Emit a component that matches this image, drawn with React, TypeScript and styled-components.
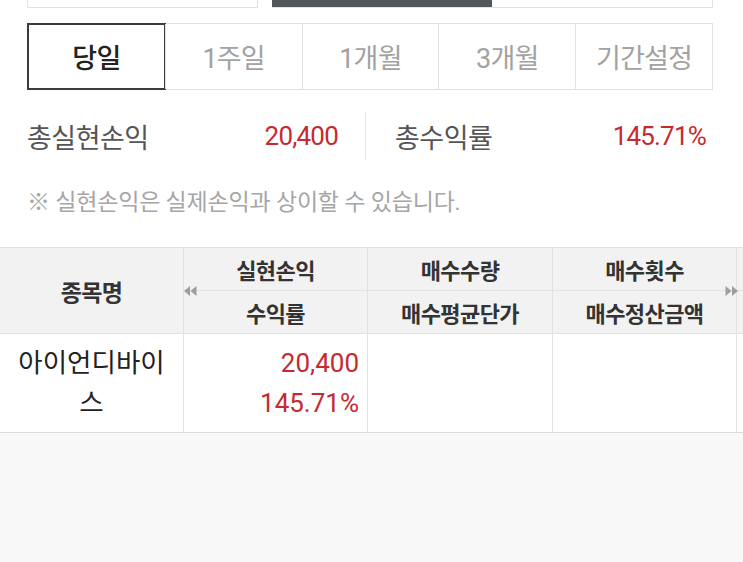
import React from 'react';
import styled, { createGlobalStyle } from 'styled-components';

const GlobalStyle = createGlobalStyle`
  html, body {
    margin: 0;
    padding: 0;
    background: #fff;
  }
  body {
    font-family: Roboto, 'Noto Sans CJK KR', sans-serif;
    color: #222;
    overflow: hidden;
  }
  * {
    box-sizing: border-box;
  }
`;

const S = {
  Page: styled.div`
    display: flex;
    flex-direction: column;
    min-height: 100vh;
    overflow: hidden;
  `,
  Controls: styled.div`
    display: flex;
    align-items: stretch;
    gap: 14px;
    height: 40px;
    margin-top: -32px;
    padding: 0 30px 0 27px;
  `,
  SelectBox: styled.div`
    width: 231px;
    border: 1px solid #e2e2e2;
    background: #fff;
  `,
  Toggle: styled.div`
    flex: 1;
    display: flex;
    border: 1px solid #e2e2e2;
    border-left: none;
  `,
  ToggleHalf: styled.div<{ $on?: boolean }>`
    flex: 1;
    background: ${(p) => (p.$on ? '#53575b' : '#fff')};
  `,
  Tabs: styled.div`
    display: grid;
    grid-template-columns: repeat(5, 1fr);
    height: 67px;
    margin: 15px 30px 0 27px;
    border: 1px solid #e2e2e2;
  `,
  Tab: styled.div<{ $active?: boolean }>`
    display: flex;
    align-items: center;
    justify-content: center;
    font-size: 27px;
    color: ${(p) => (p.$active ? '#222' : '#a2a2a2')};
    border-left: 1px solid #e2e2e2;
    letter-spacing: -0.8px;
    ${(p) =>
      p.$active &&
      `
      border: 2px solid #3c3c3c;
      margin: -1px;
      font-weight: 500;
    `}
    &:first-child {
      border-left: ${(p) => (p.$active ? '2px solid #3c3c3c' : 'none')};
    }
  `,
  Summary: styled.div`
    display: flex;
    align-items: center;
    height: 48px;
    margin-top: 22px;
    padding: 0 37px 0 27px;
  `,
  SummaryItem: styled.div<{ $right?: boolean }>`
    flex: 1;
    display: flex;
    align-items: center;
    justify-content: space-between;
    padding: ${(p) => (p.$right ? '0 0 0 26px' : '0 30px 0 0')};
  `,
  SummaryLabel: styled.span`
    font-size: 27px;
    color: #555;
    letter-spacing: -0.5px;
  `,
  SummaryValue: styled.span`
    font-size: 26px;
    color: #c62a2f;
    letter-spacing: -0.8px;
  `,
  Divider: styled.div`
    width: 1px;
    align-self: stretch;
    background: #e6e6e6;
    margin-left: -3px;
    margin-right: 3px;
  `,
  Note: styled.p`
    margin: 26px 0 0;
    padding-left: 27px;
    font-size: 23px;
    line-height: 34px;
    color: #a6a6a6;
    letter-spacing: -0.2px;
  `,
  Table: styled.div`
    position: relative;
    margin-top: 27px;
    display: grid;
    grid-template-columns: 184px 184px 185px 184px 184px;
    grid-template-rows: 43px 43px 98px;
    border-top: 1px solid #e2e2e2;
    border-bottom: 1px solid #dcdcdc;
    background: #fff;
    width: max-content;
  `,
  HeadCell: styled.div<{ $span?: boolean }>`
    display: flex;
    align-items: center;
    justify-content: center;
    background: #f2f2f2;
    border-right: 1px solid #e2e2e2;
    border-bottom: 1px solid #e2e2e2;
    font-size: 22px;
    font-weight: 700;
    color: #333;
    letter-spacing: -0.6px;
    ${(p) => p.$span && 'grid-row: span 2; font-size: 23px;'}
  `,
  NameCell: styled.div`
    display: flex;
    align-items: center;
    justify-content: center;
    padding: 0 10px;
    border-right: 1px solid #e2e2e2;
    font-size: 26.5px;
    line-height: 40px;
    color: #222;
    text-align: center;
    word-break: break-all;
  `,
  ValueCell: styled.div`
    display: flex;
    flex-direction: column;
    justify-content: center;
    align-items: flex-end;
    padding-right: 8px;
    border-right: 1px solid #e2e2e2;
    font-size: 26px;
    line-height: 40px;
    color: #c62a2f;
  `,
  Arrow: styled.div<{ $side: 'left' | 'right' }>`
    position: absolute;
    top: 37px;
    ${(p) => (p.$side === 'left' ? 'left: 183px;' : 'left: 725px;')}
    width: 14px;
    height: 12px;
    display: flex;
  `,
  Rest: styled.div`
    flex: 1;
    background: #f8f8f8;
  `,
};

function DoubleArrow({ dir }: { dir: 'left' | 'right' }) {
  const d =
    dir === 'left'
      ? 'M7 1 L7 11 L1 6 Z M13.5 1 L13.5 11 L7.5 6 Z'
      : 'M0.5 1 L0.5 11 L6.5 6 Z M7 1 L7 11 L13 6 Z';
  return (
    <svg width="14" height="12" viewBox="0 0 14 12">
      <path d={d} fill="#9e9e9e" />
    </svg>
  );
}

const tabs = ['당일', '1주일', '1개월', '3개월', '기간설정'];

export default function App() {
  return (
    <>
      <GlobalStyle />
      <S.Page>
        <S.Controls>
          <S.SelectBox />
          <S.Toggle>
            <S.ToggleHalf $on />
            <S.ToggleHalf />
          </S.Toggle>
        </S.Controls>

        <S.Tabs>
          {tabs.map((t, i) => (
            <S.Tab key={t} $active={i === 0}>
              {t}
            </S.Tab>
          ))}
        </S.Tabs>

        <S.Summary>
          <S.SummaryItem>
            <S.SummaryLabel>총실현손익</S.SummaryLabel>
            <S.SummaryValue>20,400</S.SummaryValue>
          </S.SummaryItem>
          <S.Divider />
          <S.SummaryItem $right>
            <S.SummaryLabel>총수익률</S.SummaryLabel>
            <S.SummaryValue>145.71%</S.SummaryValue>
          </S.SummaryItem>
        </S.Summary>

        <S.Note>※ 실현손익은 실제손익과 상이할 수 있습니다.</S.Note>

        <S.Table>
          <S.HeadCell $span>종목명</S.HeadCell>
          <S.HeadCell>실현손익</S.HeadCell>
          <S.HeadCell>매수수량</S.HeadCell>
          <S.HeadCell>매수횟수</S.HeadCell>
          <S.HeadCell />
          <S.HeadCell>수익률</S.HeadCell>
          <S.HeadCell>매수평균단가</S.HeadCell>
          <S.HeadCell>매수정산금액</S.HeadCell>
          <S.HeadCell />

          <S.NameCell>아이언디바이스</S.NameCell>
          <S.ValueCell>
            <span>20,400</span>
            <span>145.71%</span>
          </S.ValueCell>
          <S.ValueCell />
          <S.ValueCell />
          <S.ValueCell />

          <S.Arrow $side="left">
            <DoubleArrow dir="left" />
          </S.Arrow>
          <S.Arrow $side="right">
            <DoubleArrow dir="right" />
          </S.Arrow>
        </S.Table>

        <S.Rest />
      </S.Page>
    </>
  );
}
